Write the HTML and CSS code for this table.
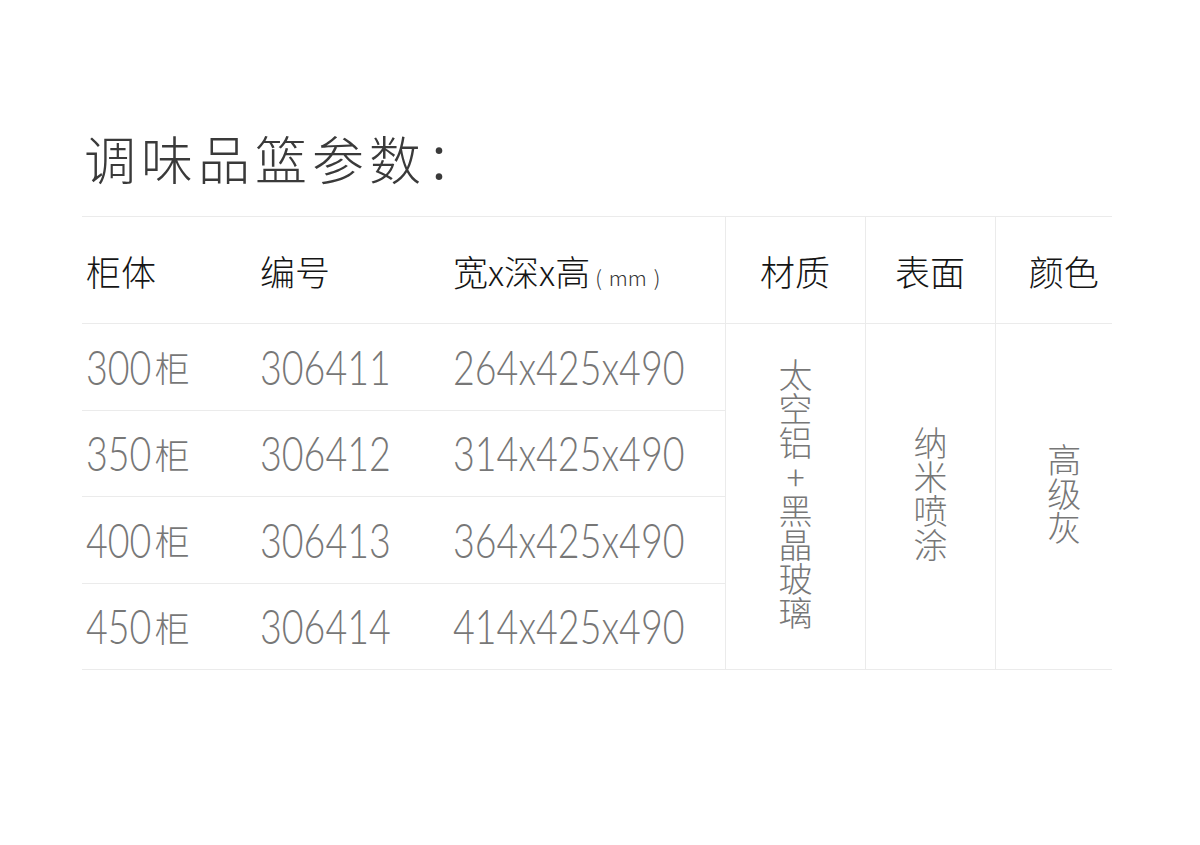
FILE: index.html
```html
<!DOCTYPE html>
<html lang="zh-CN">
<head>
    <meta charset="UTF-8">
    <meta name="viewport" content="width=device-width, initial-scale=1.0">
    <title>调味品篮参数</title>
    <link rel="stylesheet" href="styles.css">
</head>
<body>
    <div class="page">
        <h1 class="title">调味品篮参数：</h1>

        <table class="spec-table">
            <colgroup>
                <col class="col-cab">
                <col class="col-code">
                <col class="col-size">
                <col class="col-mat">
                <col class="col-surf">
                <col class="col-color">
            </colgroup>
            <thead>
                <tr>
                    <th>柜体</th>
                    <th>编号</th>
                    <th>宽x深x高<span class="unit">(<span class="mm">mm</span>)</span></th>
                    <th class="center line-left">材质</th>
                    <th class="center line-left">表面</th>
                    <th class="center line-left shift">颜色</th>
                </tr>
            </thead>
            <tbody>
                <tr>
                    <td><span class="num">300</span><span class="cjk">柜</span></td>
                    <td><span class="num">306411</span></td>
                    <td><span class="num">264x425x490</span></td>
                    <td class="merged line-left" rowspan="4"><span class="vertical">太空铝+黑晶玻璃</span></td>
                    <td class="merged line-left" rowspan="4"><span class="vertical">纳米喷涂</span></td>
                    <td class="merged line-left shift" rowspan="4"><span class="vertical">高级灰</span></td>
                </tr>
                <tr>
                    <td><span class="num">350</span><span class="cjk">柜</span></td>
                    <td><span class="num">306412</span></td>
                    <td><span class="num">314x425x490</span></td>
                </tr>
                <tr>
                    <td><span class="num">400</span><span class="cjk">柜</span></td>
                    <td><span class="num">306413</span></td>
                    <td><span class="num">364x425x490</span></td>
                </tr>
                <tr>
                    <td><span class="num">450</span><span class="cjk">柜</span></td>
                    <td><span class="num">306414</span></td>
                    <td><span class="num">414x425x490</span></td>
                </tr>
            </tbody>
        </table>
    </div>
</body>
</html>
```

FILE: styles.css
```css
* {
    margin: 0;
    padding: 0;
    box-sizing: border-box;
}

body {
    background-color: #ffffff;
    font-family: "Noto Sans CJK SC", "Noto Sans", sans-serif;
    color: #333333;
}

.page {
    padding: 128px 0 0 84px;
}

.title {
    font-size: 52px;
    line-height: 60px;
    font-weight: 300;
    letter-spacing: 5px;
    color: #3a3a3a;
    margin-bottom: 28px;
}

.spec-table {
    width: 1030px;
    margin-left: -2px;
    table-layout: fixed;
    border-collapse: collapse;
    border-top: 1px solid #ebebeb;
}

.col-cab { width: 174px; }
.col-code { width: 193px; }
.col-size { width: 276px; }
.col-mat { width: 140px; }
.col-surf { width: 130px; }
.col-color { width: 117px; }

.spec-table th {
    height: 107px;
    font-size: 35px;
    font-weight: 300;
    color: #151515;
    text-align: left;
    padding-left: 4px;
    white-space: nowrap;
    border-bottom: 1px solid #ebebeb;
}

.spec-table th.center {
    text-align: center;
    padding-left: 0;
}

.spec-table th.shift {
    padding-left: 20px;
}

.unit {
    font-size: 21px;
    margin-left: 5px;
    color: #333333;
}

.mm {
    margin: 0 7px;
}

.line-left {
    border-left: 1px solid #ebebeb;
}

.spec-table td {
    height: 86.5px;
    padding-left: 4px;
    white-space: nowrap;
    border-bottom: 1px solid #ebebeb;
    color: #777777;
}

/* narrow light digits, like the thin condensed face in the artwork */
.num {
    display: inline-block;
    font-family: Lato, "Liberation Sans", sans-serif;
    font-size: 47px;
    font-weight: 300;
    transform: scaleX(0.8);
    transform-origin: left center;
    vertical-align: middle;
}

.cjk {
    display: inline-block;
    vertical-align: middle;
    font-size: 35px;
    font-weight: 300;
    margin-left: -13px;
}

.spec-table td.merged {
    padding-left: 0;
    text-align: center;
    vertical-align: middle;
}

.spec-table td.merged.shift {
    padding-left: 20px;
}

.vertical {
    display: inline-block;
    writing-mode: vertical-rl;
    text-orientation: upright;
    font-size: 34px;
    font-weight: 300;
    line-height: 34px;
    color: #777777;
}
```
